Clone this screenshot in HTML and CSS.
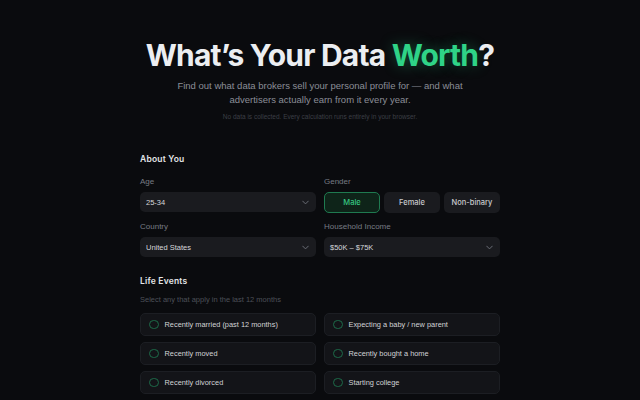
FILE: index.html
```html
<!DOCTYPE html>
<html lang="en">
<head>
<meta charset="utf-8">
<title>What's Your Data Worth?</title>
<link rel="stylesheet" href="styles.css">
</head>
<body>
<main class="page">
  <header class="hero">
    <h1 class="title">What’s Your Data <span class="accent">Worth</span>?</h1>
    <p class="lead">Find out what data brokers sell your personal profile for — and what advertisers actually earn from it every year.</p>
    <p class="note">No data is collected. Every calculation runs entirely in your browser.</p>
  </header>

  <section class="section">
    <h2 class="section-title">About You</h2>
    <div class="grid">
      <div class="field">
        <label class="label">Age</label>
        <div class="select"><span>25-34</span><svg class="chev" viewBox="0 0 10 6" width="7" height="5"><path d="M1 1l4 4 4-4" fill="none" stroke="currentColor" stroke-width="1.4" stroke-linecap="round" stroke-linejoin="round"/></svg></div>
      </div>
      <div class="field">
        <label class="label">Gender</label>
        <div class="seg">
          <button class="seg-btn active">Male</button>
          <button class="seg-btn">Female</button>
          <button class="seg-btn">Non-binary</button>
        </div>
      </div>
      <div class="field">
        <label class="label">Country</label>
        <div class="select"><span>United States</span><svg class="chev" viewBox="0 0 10 6" width="7" height="5"><path d="M1 1l4 4 4-4" fill="none" stroke="currentColor" stroke-width="1.4" stroke-linecap="round" stroke-linejoin="round"/></svg></div>
      </div>
      <div class="field">
        <label class="label">Household Income</label>
        <div class="select"><span>$50K – $75K</span><svg class="chev" viewBox="0 0 10 6" width="7" height="5"><path d="M1 1l4 4 4-4" fill="none" stroke="currentColor" stroke-width="1.4" stroke-linecap="round" stroke-linejoin="round"/></svg></div>
      </div>
    </div>
  </section>

  <section class="section events">
    <h2 class="section-title">Life Events</h2>
    <p class="hint">Select any that apply in the last 12 months</p>
    <div class="event-grid">
      <div class="event"><span class="radio"></span>Recently married (past 12 months)</div>
      <div class="event"><span class="radio"></span>Expecting a baby / new parent</div>
      <div class="event"><span class="radio"></span>Recently moved</div>
      <div class="event"><span class="radio"></span>Recently bought a home</div>
      <div class="event"><span class="radio"></span>Recently divorced</div>
      <div class="event"><span class="radio"></span>Starting college</div>
    </div>
  </section>
</main>
</body>
</html>
```

FILE: styles.css
```css
* { box-sizing: border-box; }
html, body { margin: 0; padding: 0; }
body {
  background: #0a0b0e;
  color: #e8e9ec;
  font-family: "Liberation Sans", Arial, sans-serif;
  overflow: hidden;
  height: 400px;
}
.page {
  width: 360px;
  margin: 0 auto;
  padding-top: 36px;
}
.hero { text-align: center; }
.title {
  margin: 0;
  font-family: Inter, "Liberation Sans", sans-serif;
  font-size: 30px;
  line-height: 38px;
  font-weight: 700;
  letter-spacing: -0.8px;
  color: #eceef1;
  white-space: nowrap;
  margin-left: -30px;
  margin-right: -30px;
}
.accent {
  color: #2fd387;
  text-shadow: 0 0 14px rgba(47, 211, 135, 0.35);
}
.lead {
  margin: 5px auto 0;
  width: 300px;
  font-size: 9.5px;
  line-height: 14px;
  color: #8a8e97;
}
.note {
  margin: 5px 0 0;
  font-size: 6.5px;
  line-height: 10px;
  color: #3c3f46;
}
.section { margin-top: 31px; }
.section-title {
  margin: 0;
  font-family: Inter, "Liberation Sans", sans-serif;
  font-size: 8.5px;
  line-height: 12px;
  font-weight: 600;
  letter-spacing: 0.2px;
  color: #e4e5e8;
}
.grid {
  margin-top: 12px;
  display: grid;
  grid-template-columns: 176px 176px;
  column-gap: 8px;
  row-gap: 9px;
}
.field { display: flex; flex-direction: column; }
.label {
  font-size: 8px;
  line-height: 10px;
  color: #777b84;
  margin-bottom: 5px;
}
.select {
  height: 20px;
  border-radius: 5px;
  background: #1a1b1f;
  display: flex;
  align-items: center;
  justify-content: space-between;
  padding: 0 7px 0 6px;
  font-size: 7.5px;
  color: #d6d7da;
}
.chev { color: #6c7078; }
.seg {
  display: grid;
  grid-template-columns: 56px 56px 56px;
  column-gap: 4px;
}
.seg-btn {
  height: 21px;
  border-radius: 5px;
  border: 1px solid transparent;
  background: #1a1b1f;
  color: #c9cacd;
  font-family: Inter, "Liberation Sans", sans-serif;
  font-size: 7.5px;
  font-weight: 500;
  padding: 0;
}
.seg-btn.active {
  background: #0e2419;
  border-color: #1f7a50;
  color: #36c883;
}
.events { margin-top: 18px; }
.hint {
  margin: 8px 0 0;
  font-size: 7.5px;
  line-height: 10px;
  color: #4c5058;
}
.event-grid {
  margin-top: 8px;
  display: grid;
  grid-template-columns: 176px 176px;
  column-gap: 8px;
  row-gap: 6px;
}
.event {
  height: 23px;
  border-radius: 5px;
  background: #131418;
  border: 1px solid #1c1e23;
  display: flex;
  align-items: center;
  padding-left: 8px;
  font-size: 7.4px;
  color: #d2d3d6;
}
.radio {
  width: 9.5px;
  height: 9.5px;
  border-radius: 50%;
  border: 1px solid #1d6b49;
  margin-right: 6px;
  flex: none;
}
```
